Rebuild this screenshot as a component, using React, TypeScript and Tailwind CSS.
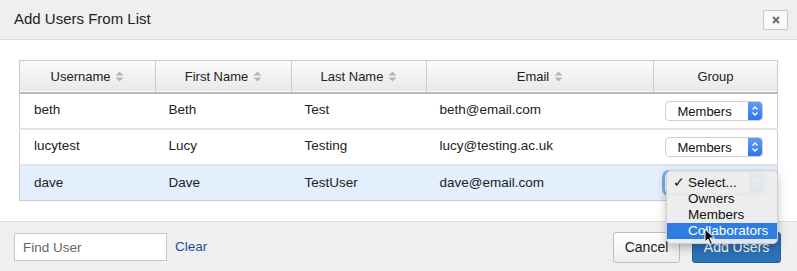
import React from 'react';

const users = [
  { username: 'beth', first: 'Beth', last: 'Test', email: 'beth@email.com', group: 'Members' },
  { username: 'lucytest', first: 'Lucy', last: 'Testing', email: 'lucy@testing.ac.uk', group: 'Members' },
  { username: 'dave', first: 'Dave', last: 'TestUser', email: 'dave@email.com', group: '' },
];

function SortIcon() {
  return (
    <svg width="9" height="11" viewBox="0 0 9 11" className="inline-block ml-[5px] -mt-[2px] align-middle">
      <path d="M4.5 0.5 L8.5 4.5 L0.5 4.5 Z" fill="#b5b5b5" />
      <path d="M4.5 10.5 L8.5 6.5 L0.5 6.5 Z" fill="#b5b5b5" />
    </svg>
  );
}

function SelectBox({ value, focused }: { value: string; focused?: boolean }) {
  return (
    <div
      className={`flex h-[20px] w-[98px] overflow-hidden rounded-[4px] bg-white ${
        focused ? 'ring-[3px] ring-[#7aa9ee]' : 'border border-[#cfcfcf]'
      }`}
    >
      <div className="flex-1 pl-[12px] text-[13px] leading-[19px] text-[#111]">{value}</div>
      <div className="flex w-[14px] items-center justify-center rounded-r-[3px] bg-gradient-to-b from-[#5d9cf7] to-[#2f75ea]">
        <svg width="8" height="12" viewBox="0 0 8 12">
          <path d="M1.5 4.5 L4 2 L6.5 4.5" stroke="white" strokeWidth="1.4" fill="none" />
          <path d="M1.5 7.5 L4 10 L6.5 7.5" stroke="white" strokeWidth="1.4" fill="none" />
        </svg>
      </div>
    </div>
  );
}

export default function App() {
  return (
    <div className="relative h-[271px] w-[797px] overflow-hidden bg-white font-['Liberation_Sans',Arial,sans-serif] text-[#222]">
      {/* Header */}
      <div className="flex h-[40px] items-center justify-between border-b border-[#dcdcdc] bg-[#efefef] pl-[14px] pr-[9px]">
        <h1 className="text-[15px] text-[#222]">Add Users From List</h1>
        <button className="flex h-[20px] w-[25px] items-center justify-center rounded-[2px] border border-[#c4c4c4] bg-[#f9f9f9]">
          <svg width="8" height="8" viewBox="0 0 8 8">
            <path d="M1 1 L7 7 M7 1 L1 7" stroke="#6b6b6b" strokeWidth="2" />
          </svg>
        </button>
      </div>

      {/* Body */}
      <div className="px-[19px] pt-[20px] pb-[20px]">
        <table className="w-[758px] table-fixed border-collapse border border-[#cccccc] text-[13.5px]">
          <colgroup>
            <col className="w-[136px]" />
            <col className="w-[136px]" />
            <col className="w-[135px]" />
            <col className="w-[227px]" />
            <col className="w-[124px]" />
          </colgroup>
          <thead>
            <tr className="h-[32px] border-b-2 border-[#b9b9b9] bg-gradient-to-b from-[#fbfbfb] to-[#e9e9e9] text-[13px]">
              {['Username', 'First Name', 'Last Name', 'Email'].map((h) => (
                <th key={h} className="border-r border-[#cccccc] text-center font-normal text-[#222]">
                  {h}
                  <SortIcon />
                </th>
              ))}
              <th className="text-center font-normal text-[#222]">Group</th>
            </tr>
          </thead>
          <tbody>
            {users.map((u, i) => (
              <tr
                key={u.username}
                className={`h-[36px] ${i < users.length - 1 ? 'border-b-2 border-[#e2e2e2]' : ''} ${
                  i === 2 ? 'bg-[#e3effc]' : 'bg-white'
                }`}
              >
                <td className="pl-[14px]">{u.username}</td>
                <td className="pl-[13px]">{u.first}</td>
                <td className="pl-[13px]">{u.last}</td>
                <td className="pl-[13px]">{u.email}</td>
                <td className="pl-[11px]">
                  {i < 2 ? (
                    <SelectBox value={u.group} />
                  ) : (
                    <div className="relative">
                      <SelectBox value="" focused />
                    </div>
                  )}
                </td>
              </tr>
            ))}
          </tbody>
        </table>
      </div>

      {/* Footer */}
      <div className="flex h-[51px] items-center justify-between border-t border-[#dedede] bg-[#efefef] pl-[14px] pr-[16px]">
        <div className="flex items-center gap-[8px]">
          <input
            placeholder="Find User"
            className="h-[28px] w-[153px] border border-[#c8c8c8] bg-white px-[8px] text-[13.5px] text-[#333] placeholder-[#666] outline-none"
          />
          <a className="text-[13.5px] text-[#1a4fa8]">Clear</a>
        </div>
        <div className="flex items-center gap-[12px]">
          <button className="h-[31px] w-[67px] rounded-[3px] border border-[#bdbdbd] bg-gradient-to-b from-white to-[#ededed] text-[14px] text-[#222]">
            Cancel
          </button>
          <button className="h-[31px] w-[89px] rounded-[3px] border border-[#25609c] bg-[#2b72b6] text-[14px] text-white">
            Add Users
          </button>
        </div>
      </div>

      {/* Native select popup */}
      <div className="absolute left-[666px] top-[170px] w-[112px] rounded-[5px] border border-[#cfcfcf] bg-[#ececec]/95 py-[4px] text-[13.5px] text-[#111] shadow-[0_4px_10px_rgba(0,0,0,0.25)]">
        <div className="relative h-[16px] pl-[21px] leading-[16px]">
          <span className="absolute left-[6px] top-0">✓</span>
          Select...
        </div>
        <div className="h-[16px] pl-[21px] leading-[16px]">Owners</div>
        <div className="h-[16px] pl-[21px] leading-[16px]">Members</div>
        <div className="h-[16px] bg-[#2f7de1] pl-[21px] leading-[16px] text-white">Collaborators</div>
      </div>

      {/* Cursor */}
      <svg className="absolute left-[704px] top-[228px]" width="12" height="18" viewBox="0 0 12 18">
        <path d="M1 1 L1 14 L4 11 L6.5 16.5 L8.5 15.5 L6 10 L10.5 10 Z" fill="#111" stroke="white" strokeWidth="1" />
      </svg>
    </div>
  );
}
